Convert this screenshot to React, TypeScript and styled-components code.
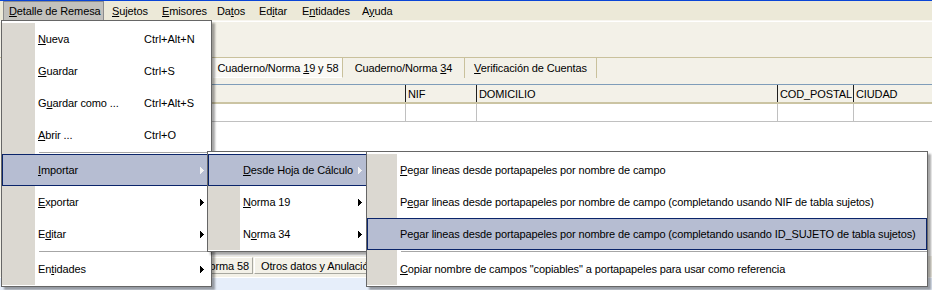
import React from "react";
import styled, { createGlobalStyle, css } from "styled-components";

const GlobalStyle = createGlobalStyle`
  html, body {
    margin: 0;
    padding: 0;
    background: #ffffff;
  }
  body {
    font-family: "Liberation Sans", Arial, sans-serif;
    font-size: 11px;
    letter-spacing: -0.12px;
    color: #000;
  }
`;

type Entry = {
  label?: string;
  keys?: string;
  sub?: boolean;
  hot?: boolean;
  sep?: boolean;
};

const barItems = [
  { text: "&Detalle de Remesa", w: 103, open: true },
  { text: "&Sujetos", w: 50 },
  { text: "&Emisores", w: 55 },
  { text: "Da&tos", w: 42 },
  { text: "Ed&itar", w: 43 },
  { text: "E&ntidades", w: 60 },
  { text: "A&yuda", w: 50 },
];

const remesaMenu: Entry[] = [
  { label: "&Nueva", keys: "Ctrl+Alt+N" },
  { label: "&Guardar", keys: "Ctrl+S" },
  { label: "G&uardar como ...", keys: "Ctrl+Alt+S" },
  { label: "&Abrir ...", keys: "Ctrl+O" },
  { sep: true },
  { label: "&Importar", sub: true, hot: true },
  { label: "&Exportar", sub: true },
  { label: "E&ditar", sub: true },
  { sep: true },
  { label: "En&tidades", sub: true },
];

const importarMenu: Entry[] = [
  { label: "&Desde Hoja de Cálculo", sub: true, hot: true },
  { label: "&Norma 19", sub: true },
  { label: "N&orma 34", sub: true },
];

const hojaMenu: Entry[] = [
  { label: "&Pegar lineas desde portapapeles por nombre de campo" },
  { label: "P&egar lineas desde portapapeles por nombre de campo (completando usando NIF de tabla sujetos)" },
  { label: "Pe&gar lineas desde portapapeles por nombre de campo (completando usando ID_SUJETO de tabla sujetos)", hot: true },
  { sep: true },
  { label: "&Copiar nombre de campos \"copiables\" a portapapeles para usar como referencia" },
];

const columns = [
  { title: "", w: 393 },
  { title: "NIF", w: 71 },
  { title: "DOMICILIO", w: 301 },
  { title: "COD_POSTAL", w: 76 },
  { title: "CIUDAD", w: 79 },
];

// "&" marca la letra subrayada, como en los menús de Delphi
const Mnemonic = ({ text }: { text: string }) => {
  const i = text.indexOf("&");
  if (i < 0) return <span>{text}</span>;
  return (
    <span>
      {text.slice(0, i)}
      <Key>{text[i + 1]}</Key>
      {text.slice(i + 2)}
    </span>
  );
};

const SubArrow = ({ hot }: { hot?: boolean }) => (
  <ArrowIcon width="4" height="7" viewBox="0 0 4 7" $hot={hot}>
    <path d="M0 0h1v7H0z M1 1h1v5H1z M2 2h1v3H2z M3 3h1v1H3z" />
  </ArrowIcon>
);

type MenuProps = {
  entries: Entry[];
  x: number;
  y: number;
  w: number;
  gutter: number;
  textW?: number;
  layer: number;
};

const Menu = ({ entries, x, y, w, gutter, textW, layer }: MenuProps) => (
  <MenuBox $x={x} $y={y} $w={w} $layer={layer}>
    {entries.map((e, i) =>
      e.sep ? (
        <Separator key={i} $gutter={gutter} />
      ) : (
        <Item key={i} $gutter={gutter} $hot={e.hot}>
          <ItemText $w={textW}>
            <Mnemonic text={e.label || ""} />
          </ItemText>
          {e.keys && <Keys>{e.keys}</Keys>}
          {e.sub && <SubArrow hot={e.hot} />}
        </Item>
      )
    )}
  </MenuBox>
);

export default function App() {
  return (
    <>
      <GlobalStyle />
      <Window>
        <TitleEdge />
        <MenuBar>
          {barItems.map((b) => (
            <BarItem key={b.text} $w={b.w} $open={b.open}>
              <Mnemonic text={b.text} />
            </BarItem>
          ))}
        </MenuBar>
        <Toolbar />
        <TabStrip>
          <Tab $w={130} $selected>
            <Mnemonic text="Cuaderno/Norma &19 y 58" />
          </Tab>
          <Tab $w={122}>
            <Mnemonic text="Cuaderno/Norma &34" />
          </Tab>
          <Tab $w={132}>
            <Mnemonic text="&Verificación de Cuentas" />
          </Tab>
        </TabStrip>
        <GridPanel>
          <GridHeader>
            {columns.map((c, i) => (
              <HeadCell key={i} $w={c.w} $first={i === 0}>
                {c.title}
              </HeadCell>
            ))}
          </GridHeader>
          <GridRow>
            {columns.map((c, i) => (
              <RowCell key={i} $w={c.w} $first={i === 0} />
            ))}
          </GridRow>
        </GridPanel>
        <BottomTabs>
          <BottomTab $w={53} $align="right">
            Norma 58
          </BottomTab>
          <BottomTab $w={150} $align="left">
            Otros datos y Anulación
          </BottomTab>
        </BottomTabs>
        <StatusArea />

        <Menu entries={remesaMenu} x={1} y={20} w={211} gutter={33} textW={106} layer={2} />
        <Menu entries={importarMenu} x={207} y={151} w={163} gutter={32} layer={3} />
        <Menu entries={hojaMenu} x={366} y={151} w={562} gutter={30} layer={4} />
      </Window>
    </>
  );
}

const Window = styled.div`
  position: relative;
  width: 932px;
  height: 290px;
  overflow: hidden;
  display: flex;
  flex-direction: column;
  background: #f3f1e8;
`;

const TitleEdge = styled.div`
  flex: none;
  height: 1px;
  background: #0a45d6;
`;

const MenuBar = styled.div`
  flex: none;
  height: 19px;
  display: flex;
  padding-left: 3px;
  background: #ece9d8;
`;

const BarItem = styled.div<{ $w: number; $open?: boolean }>`
  box-sizing: border-box;
  width: ${(p) => p.$w}px;
  padding-left: 6px;
  display: flex;
  align-items: center;
  white-space: nowrap;
  ${(p) =>
    p.$open &&
    css`
      width: ${p.$w - 2}px;
      margin-right: 2px;
      padding-left: 5px;
      background: #c2c1bd;
      border: 1px solid #8c8c8c;
      border-bottom: none;
    `}
`;

const Key = styled.span`
  text-decoration: underline;
  text-underline-offset: 1px;
`;

const Toolbar = styled.div`
  flex: none;
  height: 36px;
  background: #f3f1e8;
  border-top: 1px solid #f7f5ef;
  box-shadow: inset 0 1px 0 #ffffff;
`;

const TabStrip = styled.div`
  flex: none;
  box-sizing: border-box;
  height: 21px;
  display: flex;
  padding-left: 213px;
  border-top: 1px solid #c9c19c;
  margin-bottom: 6px;
`;

const Tab = styled.div<{ $w: number; $selected?: boolean }>`
  box-sizing: border-box;
  width: ${(p) => p.$w}px;
  display: flex;
  align-items: center;
  justify-content: center;
  white-space: nowrap;
  border-right: 1px solid #c9c19c;
  ${(p) =>
    p.$selected &&
    css`
      background: #faf9f5;
      border: 1px solid #ffffff;
      border-right: 1px solid #c9c19c;
      border-top: none;
    `}
`;

const GridPanel = styled.div`
  flex: 1;
  margin-left: 12px;
  background: #ffffff;
  border-top: 1px solid #7f9db9;
`;

const GridHeader = styled.div`
  display: flex;
  height: 17px;
  background: #f3f1e8;
  border-bottom: 2px solid #cbc4a3;
`;

const HeadCell = styled.div<{ $w: number; $first?: boolean }>`
  box-sizing: border-box;
  width: ${(p) => p.$w}px;
  padding-left: 2px;
  display: flex;
  align-items: center;
  white-space: nowrap;
  border-left: ${(p) => (p.$first ? "none" : "1px solid #1e1e1e")};
`;

const GridRow = styled.div`
  display: flex;
  height: 17px;
  border-bottom: 1px solid #c0c0c0;
`;

const RowCell = styled.div<{ $w: number; $first?: boolean }>`
  box-sizing: border-box;
  width: ${(p) => p.$w}px;
  border-left: ${(p) => (p.$first ? "none" : "1px solid #c0c0c0")};
`;

const BottomTabs = styled.div`
  flex: none;
  box-sizing: border-box;
  height: 22px;
  display: flex;
  padding: 1px 0 3px 200px;
  background: #f3f1e8;
  border-bottom: 1px solid #ffffff;
`;

const BottomTab = styled.div<{ $w: number; $align: "left" | "right" }>`
  box-sizing: border-box;
  width: ${(p) => p.$w}px;
  display: flex;
  align-items: center;
  justify-content: ${(p) => (p.$align === "right" ? "flex-end" : "flex-start")};
  padding: 0 3px 0 6px;
  margin-right: 1px;
  white-space: nowrap;
  border: 1px solid #a8a8a0;
  border-top-color: #ffffff;
  border-left-color: #ffffff;
`;

const StatusArea = styled.div`
  flex: none;
  height: 12px;
  background: #e6eefa;
`;

const MenuBox = styled.div<{ $x: number; $y: number; $w: number; $layer: number }>`
  position: absolute;
  left: ${(p) => p.$x}px;
  top: ${(p) => p.$y}px;
  width: ${(p) => p.$w}px;
  z-index: ${(p) => p.$layer};
  box-sizing: border-box;
  padding: 2px 0 1px;
  background: #ffffff;
  border: 1px solid #666666;
  box-shadow: 3px 3px 2px rgba(0, 0, 0, 0.35);
`;

const Item = styled.div<{ $gutter: number; $hot?: boolean }>`
  height: 32px;
  display: flex;
  align-items: center;
  padding-left: ${(p) => p.$gutter + 3}px;
  white-space: nowrap;
  background: linear-gradient(
    to right,
    #dbd8d1 ${(p) => p.$gutter}px,
    #ffffff ${(p) => p.$gutter}px
  );
  ${(p) =>
    p.$hot &&
    css`
      background: #b6bdd2;
      box-shadow: inset 0 0 0 1px #0a246a;
    `}
`;

const ItemText = styled.span<{ $w?: number }>`
  ${(p) => (p.$w ? `width: ${p.$w}px;` : "")}
`;

const Keys = styled.span`
  color: #000;
  letter-spacing: 0;
`;

const ArrowIcon = styled.svg<{ $hot?: boolean }>`
  margin-left: auto;
  margin-right: 7px;
  flex: none;
  fill: ${(p) => (p.$hot ? "#f4f4f4" : "#000000")};
  shape-rendering: crispEdges;
`;

const Separator = styled.div<{ $gutter: number }>`
  height: 3px;
  display: flex;
  align-items: center;
  background: linear-gradient(
    to right,
    #dbd8d1 ${(p) => p.$gutter}px,
    #ffffff ${(p) => p.$gutter}px
  );
  &::after {
    content: "";
    height: 1px;
    flex: 1;
    margin-left: ${(p) => p.$gutter + 4}px;
    background: #a6a6a6;
  }
`;
